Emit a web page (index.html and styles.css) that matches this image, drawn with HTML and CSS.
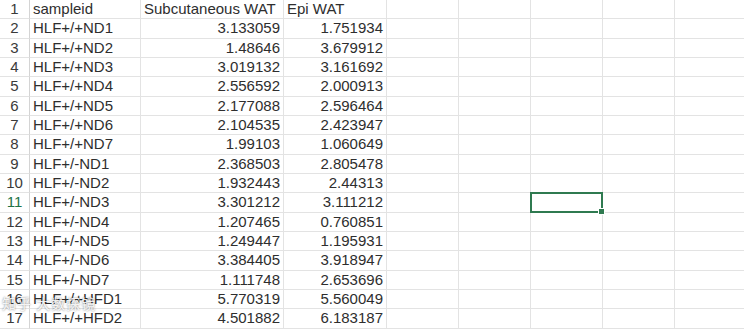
FILE: index.html
```html
<!DOCTYPE html>
<html>
<head>
<meta charset="utf-8">
<link rel="stylesheet" href="styles.css">
</head>
<body>
<div class="sheet">
  <div class="grid" id="grid"></div>
  <div class="watermark">知乎 大数探镜</div>
</div>
<script>
const data = [
  ["sampleid","Subcutaneous WAT","Epi WAT"],
  ["HLF+/+ND1","3.133059","1.751934"],
  ["HLF+/+ND2","1.48646","3.679912"],
  ["HLF+/+ND3","3.019132","3.161692"],
  ["HLF+/+ND4","2.556592","2.000913"],
  ["HLF+/+ND5","2.177088","2.596464"],
  ["HLF+/+ND6","2.104535","2.423947"],
  ["HLF+/+ND7","1.99103","1.060649"],
  ["HLF+/-ND1","2.368503","2.805478"],
  ["HLF+/-ND2","1.932443","2.44313"],
  ["HLF+/-ND3","3.301212","3.111212"],
  ["HLF+/-ND4","1.207465","0.760851"],
  ["HLF+/-ND5","1.249447","1.195931"],
  ["HLF+/-ND6","3.384405","3.918947"],
  ["HLF+/-ND7","1.111748","2.653696"],
  ["HLF+/+HFD1","5.770319","5.560049"],
  ["HLF+/+HFD2","4.501882","6.183187"]
];
const grid = document.getElementById('grid');
data.forEach((row, i) => {
  const h = document.createElement('div');
  h.className = 'rh' + (i === 10 ? ' rh-sel' : '');
  h.textContent = i + 1;
  grid.appendChild(h);
  row.forEach((v, j) => {
    const c = document.createElement('div');
    c.className = 'cell' + (i > 0 && j > 0 ? ' num' : '');
    c.textContent = v;
    grid.appendChild(c);
  });
  for (let k = 0; k < 5; k++) {
    const c = document.createElement('div');
    c.className = 'cell' + (i === 10 && k === 2 ? ' sel' : '');
    grid.appendChild(c);
  }
});
</script>
</body>
</html>
```
FILE: styles.css
```css
html, body {
  margin: 0;
  padding: 0;
  background: #fff;
  overflow: hidden;
}
.sheet {
  position: relative;
  width: 744px;
  height: 331px;
  overflow: hidden;
}
.grid {
  display: grid;
  grid-template-columns: 30px 111px 143px 103px 72px 72px 72px 72px 72px;
  grid-auto-rows: 19.333px;
  font-family: "Liberation Sans", Arial, sans-serif;
  font-size: 15px;
  color: #2e2e2e;
}
.rh, .cell {
  box-sizing: border-box;
  border-right: 1px solid #e3e3e3;
  border-bottom: 1px solid #e3e3e3;
  line-height: 18px;
  white-space: nowrap;
  overflow: hidden;
}
.rh {
  text-align: center;
  border-right-color: #d4d4d4;
  color: #3a3a3a;
}
.rh-sel {
  color: #217346;
}
.cell {
  padding: 0 3px;
}
.num {
  text-align: right;
}
.sel {
  position: relative;
  overflow: visible;
}
.sel::before {
  content: "";
  position: absolute;
  left: -1px;
  top: -1px;
  right: -1px;
  bottom: -1px;
  border: 2px solid #2f7a50;
}
.sel::after {
  content: "";
  position: absolute;
  right: -3px;
  bottom: -3px;
  width: 5px;
  height: 5px;
  background: #2f7a50;
  border: 1px solid #fff;
}
.watermark {
  position: absolute;
  left: 2px;
  top: 293px;
  font-family: "Noto Sans CJK SC", sans-serif;
  font-size: 14px;
  color: rgba(255, 255, 255, 0.9);
  text-shadow: 0 0 2px rgba(0, 0, 0, 0.55);
  letter-spacing: 1px;
}
```
